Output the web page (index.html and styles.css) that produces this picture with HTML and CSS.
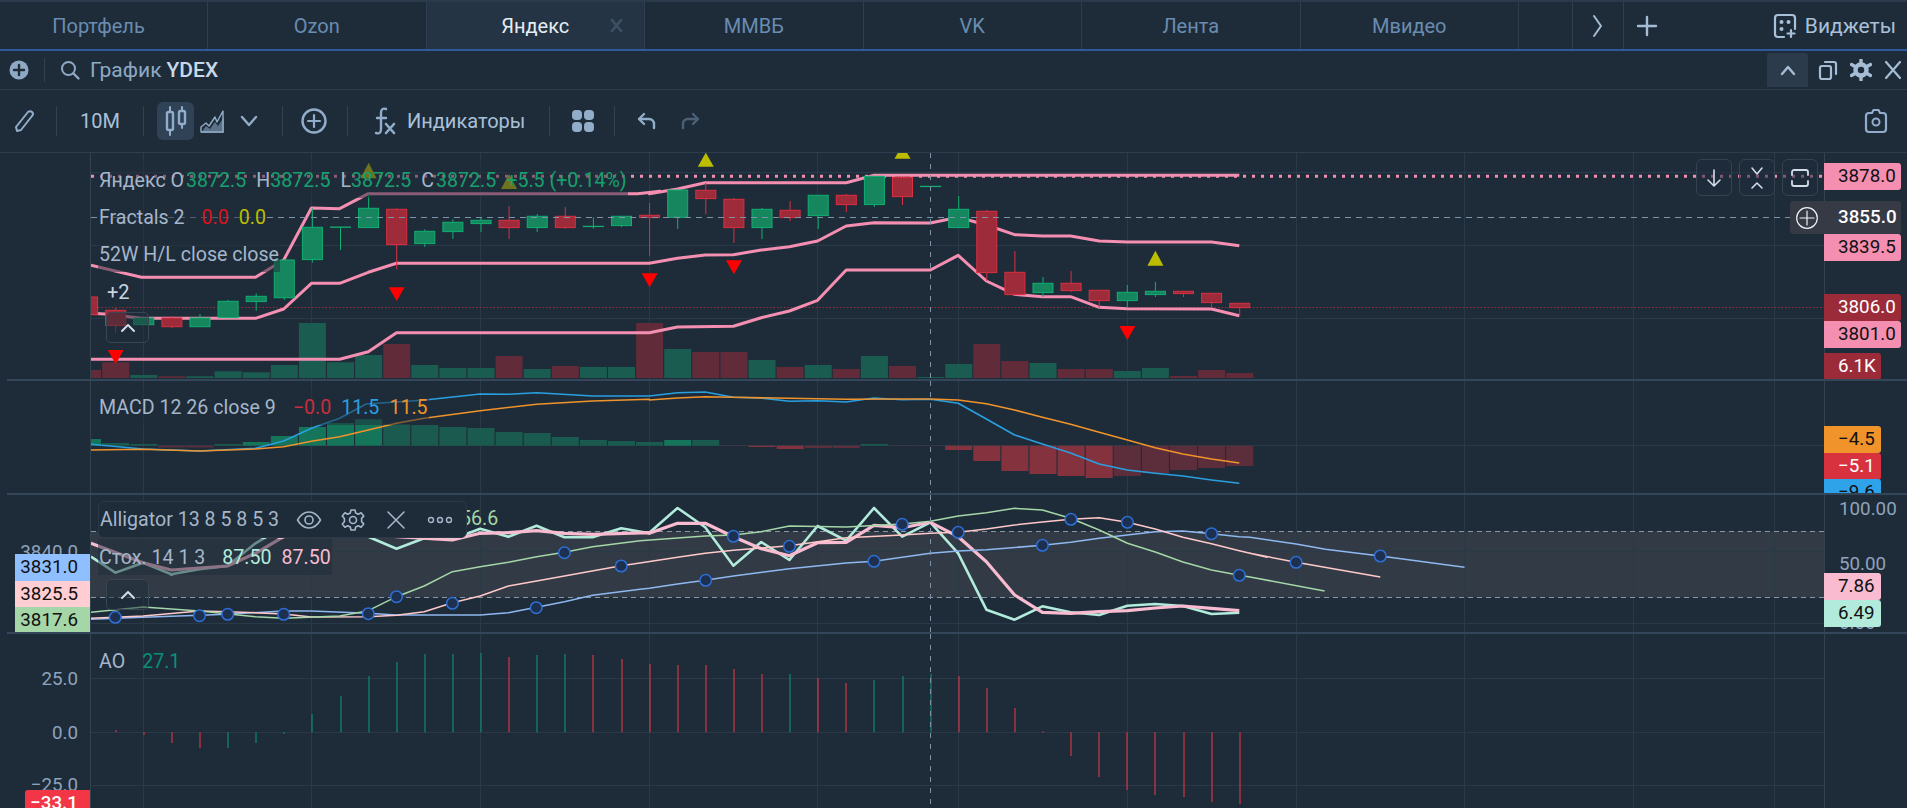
FILE: index.html
```html
<!DOCTYPE html>
<html lang="ru">
<head>
<meta charset="utf-8">
<title>График YDEX</title>
<link rel="stylesheet" href="styles.css">
</head>
<body>
<div class="app">
  <nav class="tabs">
    <div class="tab tab-first">Портфель</div>
    <div class="tab">Ozon</div>
    <div class="tab tab-active">Яндекс
      <svg class="tab-close" viewBox="0 0 14 14"><path d="M2 1l10 12M12 1L2 13"/></svg>
    </div>
    <div class="tab">ММВБ</div>
    <div class="tab">VK</div>
    <div class="tab">Лента</div>
    <div class="tab">Мвидео</div>
    <div class="tab tab-rest"></div>
    <div class="tab-btn">
      <svg class="ico" width="14" height="26" viewBox="0 0 14 26"><path d="M3 3l7 10-7 10" stroke-width="2"/></svg>
    </div>
    <div class="tab-btn tab-plus">
      <svg class="ico" width="22" height="22" viewBox="0 0 22 22"><path d="M11 2v18M2 11h18" stroke-width="2.4"/></svg>
    </div>
    <div class="widgets">
      <svg class="ico" width="26" height="26" viewBox="0 0 26 26"><path d="M12 24H6a3 3 0 0 1-3-3V5a3 3 0 0 1 3-3h14a3 3 0 0 1 3 3v11" stroke-width="2.2"/><path d="M19 17v7M15.5 20.500h7" stroke-width="2.2"/><circle class="ico-fill" cx="9.500" cy="9" r="2"/><circle class="ico-fill" cx="16.500" cy="9" r="2"/><circle class="ico-fill" cx="9.500" cy="16" r="2"/></svg>
      <span>Виджеты</span>
    </div>
  </nav>

  <div class="symbol-bar">
    <svg class="ico add-chart" width="20" height="20" viewBox="0 0 20 20"><circle class="ico-fill" cx="10" cy="10" r="9.500"/><path class="ico-cut" d="M10 5v10M5 10h10"/></svg>
    <span class="vsep vsep-short"></span>
    <svg class="ico search" width="22" height="22" viewBox="0 0 22 22"><circle cx="9.500" cy="9.500" r="6.500" stroke-width="2"/><path d="M14.500 14.500l5 5" stroke-width="2.400"/></svg>
    <span class="symbol-label">График</span>
    <span class="symbol-name">YDEX</span>
    <div class="symbol-actions">
      <span class="collapse-active"><svg class="ico" width="18" height="12" viewBox="0 0 18 12"><path d="M3 10l6-7 6 7" stroke-width="2.400"/></svg></span>
      <svg class="ico" width="20" height="22" viewBox="0 0 20 22"><rect x="2" y="7" width="11" height="13" rx="2" stroke-width="2.200"/><path d="M7 3h9a2 2 0 0 1 2 2v10" stroke-width="2.200"/></svg>
      <svg class="ico" width="22" height="22" viewBox="0 0 22 22"><circle cx="11" cy="11" r="5.500" stroke-width="4.500"/><path d="M11 1v4M11 17v4M1.500 5.500l3.500 2M17 14.500l3.500 2M1.500 16.500l3.500-2M17 7.500l3.500-2" stroke-width="3.400"/></svg>
      <svg class="ico" width="18" height="20" viewBox="0 0 18 20"><path d="M2 2l14 16M16 2L2 18" stroke-width="2.200"/></svg>
    </div>
  </div>

  <div class="toolbar">
    <svg class="ico tool-pencil" width="22" height="24" viewBox="0 0 22 24"><path d="M3 18l1 4 4-1L19 7a2.600 2.600 0 0 0-4-4z" stroke-width="2"/></svg>
    <span class="vsep"></span>
    <span class="tool-text tool-interval">10М</span>
    <span class="vsep"></span>
    <span class="tool-active">
      <svg class="ico" width="24" height="30" viewBox="0 0 24 30"><path d="M6 1v5M6 24v5M18 1v4M18 18v4" stroke-width="2"/><rect x="3" y="6" width="6" height="18" rx="1.500" stroke-width="2.400"/><rect x="15" y="5" width="6" height="13" rx="1.500" stroke-width="2.400"/></svg>
    </span>
    <svg class="ico tool-area" width="26" height="26" viewBox="0 0 26 26"><path d="M2 24v-5l5-4 3 3 6-9 2 5 6-11v21z" stroke-width="1.400"/><path d="M2 25l5-7 4 3 5-7 3 4 6-9v16z" class="ico-soft"/></svg>
    <svg class="ico tool-down" width="18" height="12" viewBox="0 0 18 12"><path d="M2 2l7 8 7-8" stroke-width="2.400"/></svg>
    <span class="vsep"></span>
    <svg class="ico tool-plus" width="26" height="26" viewBox="0 0 26 26"><circle cx="13" cy="13" r="11.500" stroke-width="2.400"/><path d="M13 7v12M7 13h12" stroke-width="2.200"/></svg>
    <span class="vsep"></span>
    <span class="tool-fx"><svg class="ico" width="24" height="30" viewBox="0 0 24 30"><path d="M13 3c-3-1-5 0-5 4v16c0 4-2 5-5 4M4 12h9" stroke-width="2.400"/><path d="M13 18l8 9M21 18l-8 9" stroke-width="2.600"/></svg><span class="tool-text">Индикаторы</span></span>
    <span class="vsep"></span>
    <svg class="ico-solid tool-tiles" width="24" height="24" viewBox="0 0 24 24"><rect x="1" y="1" width="10" height="10" rx="4"/><rect x="13" y="1" width="10" height="10" rx="4"/><rect x="1" y="13" width="10" height="10" rx="4"/><rect x="13" y="13" width="10" height="10" rx="4"/></svg>
    <span class="vsep"></span>
    <svg class="ico tool-undo" width="20" height="20" viewBox="0 0 20 20"><path d="M7 3L2 8l5 5M2 8h10a5 5 0 0 1 5 5v4" stroke-width="2.400"/></svg>
    <svg class="ico ico-dim tool-redo" width="20" height="20" viewBox="0 0 20 20"><path d="M13 3l5 5-5 5M18 8H8a5 5 0 0 0-5 5v4" stroke-width="2.400"/></svg>
    <svg class="ico tool-camera" width="24" height="26" viewBox="0 0 24 26"><path d="M8 5l1.500-3h5L16 5h3a3 3 0 0 1 3 3v13a3 3 0 0 1-3 3H5a3 3 0 0 1-3-3V8a3 3 0 0 1 3-3z" stroke-width="2.200"/><circle cx="12" cy="14" r="3.500" stroke-width="2"/></svg>
  </div>

  <main class="panes">
    <section class="pane">
      <div class="axis axis-left"></div>
      <div class="plot">
        <svg id="plot-price" class="plot-svg"></svg>
        <div class="legend legend-price">
          <div class="legend-row"><span>Яндекс O</span><span class="up gap-xs">3872.5</span><span class="gap-s">H</span><span class="up">3872.5</span><span class="gap-s">L</span><span class="up">3872.5</span><span class="gap-s">C</span><span class="up gap-xs">3872.5</span><span class="up gap-s">+5.5 (+0.14%)</span></div>
          <div class="legend-row"><span>Fractals 2</span><span class="c-red gap-m">0.0</span><span class="c-olive gap-s">0.0</span></div>
          <div class="legend-row"><span>52W H/L close close</span></div>
          <div class="legend-more">+2</div>
          <div class="legend-toggle"><svg class="ico" width="16" height="10" viewBox="0 0 16 10"><path d="M2 8l6-6 6 6" stroke-width="2"/></svg></div>
        </div>
        <div class="corner-btns">
          <span class="corner-btn"><svg class="ico" width="18" height="20" viewBox="0 0 18 20"><path d="M9 2v16M3 12l6 6 6-6" stroke-width="1.600"/></svg></span>
          <span class="corner-btn"><svg class="ico" width="16" height="24" viewBox="0 0 16 24"><path d="M3 2l5 6 5-6M3 22l5-5 5 5" stroke-width="1.600"/></svg></span>
          <span class="corner-btn"><svg class="ico" width="20" height="20" viewBox="0 0 20 20"><path d="M2 7V4a2 2 0 0 1 2-2h12a2 2 0 0 1 2 2v3M2 13v3a2 2 0 0 0 2 2h12a2 2 0 0 0 2-2v-3" stroke-width="1.800"/></svg></span>
        </div>
        <div class="cross-add"><svg class="ico" width="22" height="22" viewBox="0 0 22 22"><circle cx="11" cy="11" r="10.300" stroke-width="1.200"/><path d="M11 4v14M4 11h14" stroke-width="1.200"/></svg></div>
      </div>
      <div class="axis axis-right">
        <span class="tag tag-pink" style="top:10px">3878.0</span>
        <span class="tag tag-cross" style="top:48px">3855.0</span>
        <span class="tag tag-pink" style="top:81px">3839.5</span>
        <span class="tag tag-darkred" style="top:141px">3806.0</span>
        <span class="tag tag-pink" style="top:168px">3801.0</span>
        <span class="tag tag-short tag-darkred" style="top:200px">6.1K</span>
      </div>
    </section>

    <section class="pane">
      <div class="axis axis-left"></div>
      <div class="plot">
        <svg id="plot-macd" class="plot-svg"></svg>
        <div class="legend legend-macd">
          <div class="legend-row"><span>MACD 12 26 close 9</span><span class="c-loss gap-m">−0.0</span><span class="c-blue gap-s">11.5</span><span class="c-orange gap-s">11.5</span></div>
        </div>
      </div>
      <div class="axis axis-right">
        <span class="tag tag-short tag-orange" style="top:45px">−4.5</span>
        <span class="tag tag-short tag-red" style="top:72px">−5.1</span>
        <span class="tag tag-short tag-blue" style="top:98px">−9.6</span>
      </div>
    </section>

    <section class="pane">
      <div class="axis axis-left">
        <span class="scale scale-left" style="top:44px">3840.0</span>
        <span class="tag tag-left tag-sky" style="top:59px">3831.0</span>
        <span class="tag tag-left tag-rose" style="top:86px">3825.5</span>
        <span class="tag tag-left tag-leaf" style="top:112px">3817.6</span>
      </div>
      <div class="plot">
        <svg id="plot-stoch" class="plot-svg"></svg>
        <span class="legend-hidden-value">56.6</span>
        <div class="legend legend-stoch">
          <div class="legend-popover">
            <span>Alligator 13 8 5 8 5 3</span>
            <svg class="ico pop-eye" width="26" height="22" viewBox="0 0 26 22"><path d="M1.500 11C5 5 9 3 13 3s8 2 11.500 8C21 17 17 19 13 19S5 17 1.500 11z" stroke-width="1.600"/><circle cx="13" cy="11" r="4" stroke-width="1.600"/></svg>
            <svg class="ico pop-gear" width="24" height="24" viewBox="0 0 24 24"><circle cx="12" cy="12" r="3.500" stroke-width="1.600"/><path d="M10 2h4l.7 3 2.600 1.200 2.800-1.500 2.600 3.400-2.100 2.300v3.200l2.100 2.300-2.600 3.400-2.800-1.500-2.600 1.200-.7 3h-4l-.7-3-2.600-1.200-2.800 1.500L1.300 16l2.100-2.300v-3.200L1.300 8.100 3.900 4.700l2.800 1.500L9.300 5z" stroke-width="1.600"/></svg>
            <svg class="ico pop-x" width="20" height="20" viewBox="0 0 20 20"><path d="M2 2l16 16M18 2L2 18" stroke-width="1.600"/></svg>
            <svg class="ico pop-dots" width="26" height="10" viewBox="0 0 26 10"><circle cx="4" cy="5" r="2.500" stroke-width="1.400"/><circle cx="13" cy="5" r="2.500" stroke-width="1.400"/><circle cx="22" cy="5" r="2.500" stroke-width="1.400"/></svg>
          </div>
          <div class="legend-row"><span>Стох. 14 1 3</span><span class="c-mint gap-m">87.50</span><span class="c-rose gap-s">87.50</span></div>
          <div class="legend-toggle"><svg class="ico" width="16" height="10" viewBox="0 0 16 10"><path d="M2 8l6-6 6 6" stroke-width="2"/></svg></div>
        </div>
      </div>
      <div class="axis axis-right">
        <span class="scale scale-right" style="top:1px">100.00</span>
        <span class="scale scale-right" style="top:56px">50.00</span>
        <span class="scale scale-right" style="top:115px">0.00</span>
        <span class="tag tag-short tag-pale" style="top:78px">7.86</span>
        <span class="tag tag-short tag-mint" style="top:105px">6.49</span>
      </div>
    </section>

    <section class="pane pane-last">
      <div class="axis axis-left">
        <span class="scale scale-left" style="top:32px">25.0</span>
        <span class="scale scale-left" style="top:86px">0.0</span>
        <span class="scale scale-left" style="top:138px">−25.0</span>
        <span class="tag tag-left tag-loss" style="top:156px">−33.1</span>
      </div>
      <div class="plot">
        <svg id="plot-ao" class="plot-svg"></svg>
        <div class="legend legend-ao">
          <div class="legend-row legend-plain"><span>AO</span><span class="c-teal gap-m">27.1</span></div>
        </div>
      </div>
      <div class="axis axis-right"></div>
    </section>
  </main>
</div>
<script src="chart.js"></script>
</body>
</html>
```

FILE: styles.css
```css
* { box-sizing: border-box; }
html, body { margin: 0; height: 100%; }
body {
  background: #1e2c3a;
  color: #9db3cb;
  font-family: Roboto, "Noto Sans", sans-serif;
  overflow: hidden;
}
.app { height: 808px; display: flex; flex-direction: column; overflow: hidden; }

.ico { fill: none; stroke: currentColor; stroke-linecap: round; stroke-linejoin: round; flex: none; display: block; }
.ico-fill { fill: currentColor; stroke: none; }
.ico-cut { stroke: #1e2c3a; stroke-width: 2.400; }
.ico-soft { fill: currentColor; stroke: none; opacity: .55; }
.ico-solid { fill: currentColor; flex: none; display: block; }
.ico-dim { color: #4c6075; }

/* tabs */
.tabs {
  height: 51px; flex: none; display: flex;
  border-top: 2px solid #2b3b4c;
  border-bottom: 2px solid #2c5a9c;
  color: #6a8cb0;
  font-size: 20px;
}
.tab {
  width: 218.500px; flex: none; display: flex; align-items: center; justify-content: center;
  position: relative; border-right: 1px solid #2e3e4f;
}
.tab-first { width: 208px; padding-right: 10px; }
.tab-active { background: #243444; color: #e6edf4; }
.tab-close { position: absolute; right: 20px; top: 16px; width: 15px; height: 15px; fill: none; stroke: #3d5063; stroke-width: 2.400; }
.tab-rest { width: 54px; }
.tab-btn { width: 51px; flex: none; display: flex; align-items: center; justify-content: center; color: #a6bdd6; border-right: 1px solid #2e3e4f; }
.tab-btn.tab-plus { border-right: 0; width: 46px; }
.widgets { margin-left: auto; display: flex; align-items: center; gap: 7px; padding-right: 11px; color: #a9c0d9; font-size: 21px; }

/* symbol bar */
.symbol-bar {
  height: 39px; flex: none; display: flex; align-items: center;
  border-bottom: 1px solid #2e3d4c; color: #8fa9c4; font-size: 21px;
}
.add-chart { margin-left: 9px; }
.vsep { width: 1px; height: 30px; background: #31414f; flex: none; }
.vsep-short { margin-left: 15px; height: 24px; }
.search { margin-left: 14px; }
.symbol-label { margin-left: 9px; }
.symbol-name { margin-left: 5px; color: #c9d8e8; font-weight: 500; }
.symbol-actions { margin-left: auto; display: flex; align-items: center; padding-right: 5px; gap: 12px; color: #a6bdd6; }
.collapse-active { width: 41px; height: 34px; background: #2b3b4c; border-radius: 3px 3px 0 0; display: flex; align-items: center; justify-content: center; margin-right: -2px; }

/* toolbar */
.toolbar {
  height: 63px; flex: none; display: flex; align-items: center;
  border-bottom: 1px solid #2e3d4c; color: #92adc9; font-size: 20px;
}
.tool-text { color: #a9c0d9; }
.tool-pencil { margin: 0 21px 0 13px; }
.tool-interval { width: 86px; text-align: center; }
.tool-active { width: 37px; height: 38px; margin-left: 13px; background: #2f4256; border-radius: 6px; display: flex; align-items: center; justify-content: center; }
.tool-area { margin-left: 5px; }
.tool-down { margin: 0 24px 0 15px; }
.tool-plus { margin: 0 20px 0 18px; }
.tool-fx { display: flex; align-items: center; gap: 10px; margin: 0 24px 0 25px; }
.tool-tiles { margin: 0 19px 0 21px; }
.tool-undo { margin-left: 22px; }
.tool-redo { margin-left: 23px; }
.tool-camera { margin-left: auto; margin-right: 19px; }

/* panes */
.panes { flex: 1; min-height: 0; display: grid; grid-template-rows: 228px 114px 139px 1fr; }
.pane { display: grid; grid-template-columns: 91px 1fr 83px; position: relative; overflow: hidden; min-height: 0; }
.pane::after { content: ""; position: absolute; left: 7px; right: 0; bottom: 0; height: 2px; background: #33465a; z-index: 5; }
.pane-last::after { display: none; }
.axis { position: relative; min-height: 0; }
.axis-left { border-right: 1px solid #33424f; }
.axis-right { border-left: 1px solid #33424f; }
.plot { position: relative; min-width: 0; min-height: 0; }
.plot-svg { display: block; width: 100%; height: 100%; }

/* axis labels */
.tag, .scale { position: absolute; height: 26.500px; line-height: 26.500px; font-size: 18.800px; white-space: nowrap; }
.tag { left: -1px; width: 77px; padding-left: 14px; border-radius: 0 3px 3px 0; color: #111; z-index: 2; }
.tag-short { width: 57px; padding-left: 14px; }
.tag-pink { background: #f48fb1; }
.tag-cross { background: #363a45; color: #fff; height: 33px; line-height: 33px; font-weight: 500; }
.tag-darkred { background: #9c2b3a; color: #fff; }
.tag-orange { background: #f0932b; }
.tag-red { background: #d8323f; color: #fff; }
.tag-blue { background: #2fa3ea; color: #111; }
.tag-pale { background: #f8bbd0; }
.tag-mint { background: #b2ebdc; }
.tag-left { left: auto; right: 0; width: 75px; padding: 0 12px 0 0; text-align: right; border-radius: 0; }
.tag-sky { background: #90bfff; }
.tag-rose { background: #ffcdd2; }
.tag-leaf { background: #a5d6a7; }
.tag-loss { background: #f23645; color: #fff; width: 65px; border-radius: 3px 0 0 0; font-weight: 500; }
.scale { color: #8fa3bb; }
.scale-left { right: 12px; }
.scale-right { left: 14px; }

/* legends */
.legend { position: absolute; left: 7px; display: flex; flex-direction: column; align-items: flex-start; z-index: 3; font-size: 19.600px; color: #a5b6ca; }
.legend-price { top: 9px; gap: 1px; }
.legend-macd { top: 8px; }
.legend-stoch { top: 6px; gap: 1px; }
.legend-ao { top: 9px; }
.legend-row { display: flex; align-items: center; height: 36px; padding: 0 1px; white-space: nowrap; background: rgba(30, 44, 58, .5); }
.legend-plain { background: none; }
.legend-more { margin: 1px 0 0 9px; height: 37px; line-height: 37px; font-size: 20px; color: #c8d4e0; }
.legend-toggle { width: 43px; height: 31px; margin-left: 8px; border: 1px solid #394654; border-radius: 5px; background: rgba(30, 44, 58, .5); display: flex; align-items: center; justify-content: center; color: #d3dde8; }
.legend-stoch .legend-toggle { margin-top: 3px; }
.legend-popover { height: 37px; width: 369px; display: flex; align-items: center; padding-left: 1px; border: 1px solid #2b3947; border-radius: 6px; background: #1e2b38; white-space: nowrap; }
.pop-eye { margin-left: 17px; }
.pop-gear { margin-left: 19px; }
.pop-x { margin-left: 21px; }
.pop-dots { margin-left: 21px; }
.legend-hidden-value { position: absolute; left: 369px; top: 12px; font-size: 19.600px; color: #a5d6a7; z-index: 2; }
.up { color: #17a06e; }
.gap-xs { margin-left: 2px; }
.gap-s { margin-left: 10px; }
.gap-m { margin-left: 17px; }
.c-red { color: #d8141e; }
.c-olive { color: #bdbd00; }
.c-loss { color: #c92c3c; }
.c-blue { color: #2a9fe0; }
.c-orange { color: #f0932b; }
.c-mint { color: #b2ebdc; }
.c-rose { color: #f8bbd0; }
.c-teal { color: #0b8f78; }

/* buttons over the price plot */
.corner-btns { position: absolute; top: 6px; right: 6px; display: flex; gap: 7px; z-index: 3; }
.corner-btn { width: 36px; height: 37px; border: 1px solid #36434f; border-radius: 6px; background: rgba(30, 44, 58, .55); display: flex; align-items: center; justify-content: center; color: #d3dde8; }
.cross-add { position: absolute; top: 48px; right: 0; width: 34px; height: 33px; background: #363a45; border-radius: 4px 0 0 4px; display: flex; align-items: center; justify-content: center; color: #eef2f6; z-index: 3; }
```

FILE: chart.js
```js
// Chart data. X positions of free points are in crop coordinates of three
// horizontal bands; y values are stored with 3 units per pixel.
var STEP = 28.1, X0 = 115.7;
function bx(i) { return X0 + STEP * i; }
function L(x) { return x / 2.376; }
function M(x) { return 640 + x / 2.376; }
function R(x) { return 1250 + x / 2.387; }
function pts(groups, base) {
  var out = [];
  groups.forEach(function (g) {
    for (var k = 0; k < g[1].length; k += 2) {
      out.push(g[0](g[1][k]).toFixed(1) + ',' + (base + g[1][k + 1] / 3).toFixed(1));
    }
  });
  return out.join(' ');
}
function line(p, color, w, extra) {
  return '<polyline points="' + p + '" fill="none" stroke="' + color + '" stroke-width="' + w + '" stroke-linejoin="round" ' + (extra || '') + '/>';
}
function rect(x, y, w, h, fill, extra) {
  return '<rect x="' + x.toFixed(1) + '" y="' + y.toFixed(1) + '" width="' + w.toFixed(1) + '" height="' + Math.max(h, 0).toFixed(1) + '" fill="' + fill + '" ' + (extra || '') + '/>';
}
function hline(y, color, extra) {
  return '<line x1="91" x2="1824" y1="' + y + '" y2="' + y + '" stroke="' + color + '" stroke-width="1" ' + (extra || '') + '/>';
}
var GRID_X = [143.5, 311.5, 480.5, 649.5, 817.5, 958.5, 1127.5, 1296.5, 1464.5, 1633.5, 1774.5];
var GRID = '#2a3948', CROSS = '#7f93a8';
function gridFor(ys, top, h) {
  var s = '';
  GRID_X.forEach(function (x) {
    s += '<line x1="' + x + '" x2="' + x + '" y1="' + top + '" y2="' + (top + h) + '" stroke="' + GRID + '"/>';
  });
  ys.forEach(function (y) { s += hline(y, GRID); });
  return s;
}
function crossV(top, h) {
  return '<line x1="930.5" x2="930.5" y1="' + top + '" y2="' + (top + h) + '" stroke="' + CROSS + '" stroke-dasharray="5 6"/>';
}
function paint(id, top, h, html) {
  var el = document.getElementById(id);
  el.setAttribute('viewBox', '91 ' + top + ' 1733 ' + h);
  el.setAttribute('preserveAspectRatio', 'none');
  el.innerHTML = html;
}

/* ---------- price pane ---------- */
var candles = [
  [-1, 441, 494, 441, 494, 'r'], [0, 481, 527, 473, 548, 'r'], [1, 504, 524, 504, 524, 'g'],
  [2, 504, 530, 498, 534, 'r'], [3, 504, 530, 492, 530, 'g'], [4, 454, 503, 450, 503, 'g'],
  [5, 439, 455, 430, 482, 'g'], [6, 330, 443, 330, 450, 'g'], [7, 232, 329, 175, 338, 'g'],
  [8, 231, 232, 231, 300, 'g'], [9, 175, 233, 133, 233, 'g'], [10, 178, 284, 175, 358, 'r'],
  [11, 244, 281, 238, 291, 'g'], [12, 217, 245, 208, 267, 'g'], [13, 211, 221, 203, 246, 'g'],
  [14, 211, 233, 168, 267, 'r'], [15, 199, 233, 192, 246, 'g'], [16, 199, 233, 171, 236, 'r'],
  [17, 229, 230, 202, 236, 'g'], [18, 199, 227, 199, 231, 'g'], [19, 196, 203, 159, 317, 'r'],
  [20, 120, 202, 120, 237, 'g'], [21, 121, 146, 99, 192, 'r'], [22, 148, 233, 144, 279, 'r'],
  [23, 178, 233, 174, 267, 'g'], [24, 181, 203, 153, 213, 'r'], [25, 136, 197, 136, 237, 'g'],
  [26, 136, 164, 132, 186, 'r'], [27, 79, 164, 79, 171, 'g'], [28, 82, 140, 78, 165, 'r'],
  [29, 109, 110, 109, 110, 'g'], [30, 178, 233, 138, 233, 'g'], [31, 184, 368, 180, 393, 'r'],
  [32, 367, 434, 303, 434, 'r'], [33, 400, 428, 381, 441, 'g'], [34, 400, 422, 363, 426, 'r'],
  [35, 421, 452, 421, 473, 'r'], [36, 427, 452, 405, 473, 'g'], [37, 424, 434, 396, 441, 'g'],
  [38, 424, 431, 424, 441, 'r'], [39, 430, 458, 430, 474, 'r'], [40, 460, 473, 460, 499, 'r']
];
var volume = [
  [660, 'r'], [637, 'r'], [675, 'g'], [679, 'r'], [679, 'g'], [664, 'g'], [667, 'g'], [645, 'g'],
  [519, 'g'], [637, 'g'], [615, 'g'], [582, 'r'], [645, 'g'], [654, 'g'], [654, 'g'], [618, 'r'],
  [657, 'g'], [648, 'r'], [651, 'g'], [651, 'g'], [519, 'r'], [597, 'g'], [606, 'r'], [606, 'r'],
  [630, 'g'], [651, 'r'], [645, 'g'], [657, 'r'], [618, 'g'], [648, 'r'], [681, 'g'], [642, 'g'],
  [582, 'r'], [633, 'r'], [639, 'g'], [657, 'r'], [657, 'r'], [663, 'g'], [654, 'g'], [678, 'r'],
  [660, 'r'], [669, 'r']
];
var fractalsUp = [[9, 38, 85], [14, 72, 117], [21, 8, 50], [28, -16, 26], [37, 302, 347]];
var fractalsDown = [[0, 600, 642], [10, 412, 453], [19, 370, 412], [22, 331, 373], [36, 528, 570]];

function tri(i, a, b, color) {
  var x = bx(i), y1 = 150 + a / 3, y2 = 150 + b / 3;
  var p = color === '#ff0000'
    ? (x - 8) + ',' + y1 + ' ' + (x + 8) + ',' + y1 + ' ' + x + ',' + y2
    : (x - 8) + ',' + y2 + ' ' + (x + 8) + ',' + y2 + ' ' + x + ',' + y1;
  return '<polygon points="' + p + '" fill="' + color + '"/>';
}

(function () {
  var s = gridFor([172.5, 245.5, 318.5], 153, 228);
  s += hline(307.5, '#9c2b3a', 'stroke-dasharray="1.500 2"');
  volume.forEach(function (v, k) {
    var i = k - 1;
    s += rect(bx(i) - 13.5, 150 + v[0] / 3, 27, 378 - (150 + v[0] / 3), v[1] === 'g' ? '#1a5c50' : '#612b39');
  });
  s += '<line x1="91" x2="1824" y1="176.3" y2="176.3" stroke="#f48fb1" stroke-width="3" stroke-dasharray="3 6"/>';
  var P = '#f48fb1', W = 3;
  s += line(pts([[L, [216, 346, 336, 382, 607, 382, 674, 330, 740, 174, 807, 176, 875, 131, 1515, 131, 1568, 124]],
    [M, [22, 131, 89, 117, 155, 98, 490, 98, 556, 76, 1424, 76]]], 150), P, W);
  s += line(pts([[L, [216, 490, 250, 492, 336, 505, 607, 505, 674, 477, 740, 400, 807, 400, 875, 367, 942, 340, 1543, 340]],
    [M, [22, 340, 89, 325, 155, 315, 222, 314, 288, 300, 355, 290, 422, 273, 490, 228, 556, 218, 690, 219, 756, 202, 823, 225, 890, 254, 956, 258, 1023, 258, 1091, 273, 1158, 276, 1358, 276, 1424, 287]]], 150), P, W);
  s += line(pts([[L, [216, 628, 807, 628, 875, 605, 942, 548, 1543, 548]],
    [M, [22, 548, 89, 531, 222, 529, 288, 503, 355, 483, 422, 451, 490, 360, 690, 360, 756, 316, 823, 393, 890, 433, 956, 440, 1023, 440, 1091, 472, 1158, 476, 1358, 477, 1424, 497]]], 150), P, W);
  candles.forEach(function (c) {
    var x = bx(c[0]), g = c[5] === 'g';
    var edge = g ? '#10b070' : '#dc2f40', fill = g ? '#16865f' : '#9e2b39';
    s += '<line x1="' + x.toFixed(1) + '" x2="' + x.toFixed(1) + '" y1="' + (150 + c[3] / 3).toFixed(1) + '" y2="' + (150 + c[4] / 3).toFixed(1) + '" stroke="' + edge + '"/>';
    s += rect(x - 10, 150 + c[1] / 3, 20, (c[2] - c[1]) / 3, fill, 'stroke="' + edge + '"');
  });
  fractalsUp.forEach(function (t) { s += tri(t[0], t[1], t[2], '#bdbd00'); });
  fractalsDown.forEach(function (t) { s += tri(t[0], t[1], t[2], '#ff0000'); });
  s += hline(217.5, CROSS, 'stroke-dasharray="6 5"') + crossV(153, 228);
  paint('plot-price', 153, 228, s);
})();

/* ---------- MACD pane ---------- */
(function () {
  var base = 380, zero = 197;
  var hist = [177, 189, 192, 202, 202, 192, 186, 168, 141, 129, 118, 132, 135, 141, 144, 156, 159, 171, 180, 183, 186, 180, 180, 198, 201, 207, 204, 204, 192, 198, 198, 210, 243, 273, 282, 288, 294, 288, 279, 270, 264, 258];
  var neg = { 3: 1, 4: 1, 23: 1, 24: 1, 25: 1, 26: 1, 27: 1, 29: 1, 30: 1, 31: 1, 32: 1, 33: 1, 34: 1, 35: 1, 36: 1, 37: 1, 38: 1, 39: 1, 40: 1, 41: 1 };
  var s = gridFor([445.5], 381, 114);
  hist.forEach(function (v, k) {
    var i = k - 1, isNeg = neg[k], mag = Math.abs(v - zero), prev = k ? Math.abs(hist[k - 1] - zero) : 0;
    var grow = mag > prev, col;
    if (isNeg) { col = grow ? '#85323f' : '#5c2e3c'; } else { col = grow ? '#15755a' : '#1b5a4e'; }
    var y = base + Math.min(v, zero) / 3;
    s += rect(bx(i) - 13.5, y, 27, mag / 3, col);
  });
  s += line(pts([[L, [216, 193, 340, 207, 474, 213, 607, 205, 674, 183, 740, 145, 807, 115, 870, 72, 1010, 60, 1141, 42, 1208, 43, 1275, 38, 1408, 48, 1543, 48]],
    [M, [22, 48, 89, 38, 155, 36, 222, 52, 288, 54, 355, 64, 422, 62, 490, 66, 556, 54, 623, 59, 690, 58, 756, 70, 823, 117, 890, 165, 956, 192, 1023, 219, 1091, 252, 1158, 270, 1224, 280, 1290, 288, 1358, 300, 1424, 310]]], base), '#2a9fe0', 1.6);
  s += line(pts([[L, [216, 210, 340, 208, 474, 213, 607, 207, 674, 200, 740, 184, 807, 170, 875, 150, 942, 130, 1008, 115, 1141, 92, 1275, 73, 1408, 63, 1543, 58]],
    [M, [22, 60, 89, 54, 155, 50, 222, 52, 355, 55, 490, 58, 623, 57, 690, 57, 756, 60, 823, 71, 890, 90, 956, 112, 1023, 133, 1091, 157, 1158, 180, 1224, 203, 1290, 222, 1358, 237, 1424, 249]]], base), '#f0932b', 1.6);
  s += crossV(381, 114);
  paint('plot-macd', 381, 114, s);
})();

/* ---------- Alligator + Stochastic pane ---------- */
(function () {
  var base = 380;
  var s = rect(91, 531.5, 1733, 66, '#313a45');
  s += gridFor([551.5, 623.5], 495, 139);
  s += hline(531.5, '#8c96a3', 'stroke-dasharray="5 4"') + hline(597.5, '#8c96a3', 'stroke-dasharray="5 4"');
  var mint = '#b2ebdc', rose = '#f8bbd0';
  s += line(pts([[L, [216, 530, 274, 578, 340, 548, 407, 583, 474, 568, 540, 558, 607, 490, 674, 440, 800, 430, 942, 506, 1008, 475, 1075, 478, 1141, 446, 1208, 470, 1275, 437, 1341, 472, 1408, 472, 1476, 445, 1543, 460]],
    [M, [22, 458, 89, 384, 155, 442, 222, 557, 288, 486, 355, 540, 422, 438, 490, 482, 556, 384, 623, 470, 690, 427, 756, 520, 823, 689, 890, 719, 956, 679, 1023, 697, 1091, 705, 1158, 677, 1224, 672, 1290, 678, 1358, 702, 1424, 698]]], base), mint, 2.6);
  s += line(pts([[L, [216, 490, 340, 548, 407, 570, 540, 558, 607, 520, 674, 470, 800, 440, 942, 470, 1075, 480, 1141, 460, 1208, 458, 1275, 452, 1341, 460, 1408, 463, 1543, 458]],
    [M, [22, 460, 89, 430, 155, 430, 222, 470, 288, 506, 355, 527, 422, 488, 490, 487, 556, 436, 623, 443, 690, 427, 756, 470, 823, 545, 890, 645, 956, 697, 1023, 700, 1091, 695, 1158, 692, 1224, 684, 1290, 678, 1358, 685, 1424, 692]]], base), rose, 3.2);
  s += line(pts([[L, [216, 718, 340, 712, 474, 706, 540, 703, 674, 693, 740, 693, 875, 700, 942, 705, 1141, 705, 1208, 698, 1275, 682, 1341, 665, 1408, 646]],
    [M, [0, 628, 22, 625, 89, 612, 155, 601, 222, 588, 355, 566, 490, 549, 556, 544, 623, 532, 690, 520, 756, 513, 823, 509, 956, 496, 1023, 487, 1091, 475, 1158, 465, 1224, 455, 1290, 453, 1358, 461, 1424, 470]],
    [R, [0, 472, 110, 492, 180, 508, 311, 528, 512, 562]]], base), '#8fb8f0', 1.5);
  s += line(pts([[L, [216, 715, 340, 708, 474, 693, 540, 695, 674, 702, 740, 711, 875, 710, 942, 706, 1008, 695, 1075, 668, 1141, 648, 1208, 618, 1275, 603, 1341, 588, 1476, 557]],
    [M, [0, 549, 89, 532, 155, 520, 222, 511, 355, 497, 490, 473, 623, 465, 690, 460, 756, 457, 823, 447, 890, 435, 956, 426, 1023, 418, 1091, 413, 1158, 427, 1224, 447, 1290, 472, 1358, 491, 1424, 512, 1490, 532]],
    [R, [0, 520, 110, 547, 311, 591]]], base), '#ffc9c9', 1.5);
  s += line(pts([[L, [216, 697, 340, 681, 474, 693, 607, 710, 674, 715, 807, 708, 875, 692, 942, 650, 1008, 618, 1075, 575, 1141, 560, 1208, 547, 1275, 530, 1341, 517, 1408, 500]],
    [M, [0, 482, 155, 468, 222, 465, 288, 455, 355, 438, 490, 441, 623, 432, 690, 424, 756, 408, 823, 398, 890, 385, 956, 390, 1023, 415, 1091, 450, 1158, 490, 1224, 516, 1290, 546, 1358, 570, 1424, 586]],
    [R, [0, 591, 178, 633]]], base), '#a5d6a7', 1.5);
  var dots = [[L, 274, 712], [L, 474, 707], [L, 541, 703], [L, 674, 703], [L, 875, 701], [L, 942, 650], [L, 1075, 670], [L, 1274, 683], [L, 1341, 518], [L, 1476, 558],
    [M, 156, 601], [M, 222, 469], [M, 355, 499], [M, 556, 544], [M, 623, 433], [M, 756, 457], [M, 956, 496], [M, 1024, 418], [M, 1158, 427], [M, 1358, 461], [M, 1424, 586],
    [R, 110, 547], [R, 311, 528]];
  dots.forEach(function (d) {
    s += '<circle cx="' + d[0](d[1]).toFixed(1) + '" cy="' + (base + d[2] / 3).toFixed(1) + '" r="5.8" fill="#1d3050" stroke="#2e6fd6" stroke-width="1.5"/>';
  });
  s += crossV(495, 139);
  paint('plot-stoch', 495, 139, s);
})();

/* ---------- AO pane ---------- */
(function () {
  var zero = 307, base = 630;
  var bars = [[300, 'r'], [315, 'r'], [339, 'r'], [354, 'r'], [354, 'g'], [339, 'g'], [312, 'g'], [252, 'g'], [198, 'g'], [138, 'g'], [96, 'g'], [72, 'g'], [72, 'g'], [69, 'g'], [81, 'r'], [75, 'g'], [72, 'g'], [75, 'r'], [87, 'r'], [102, 'r'], [105, 'r'], [105, 'r'], [117, 'r'], [132, 'r'], [132, 'g'], [144, 'r'], [159, 'r'], [150, 'g'], [138, 'g'], [132, 'g'], [138, 'r'], [174, 'r'], [234, 'r'], [303, 'r'], [378, 'r'], [441, 'r'], [480, 'r'], [495, 'r'], [501, 'r'], [516, 'r'], [522, 'r']];
  var s = gridFor([678.5, 732.5, 785.5], 634, 174);
  bars.forEach(function (b, i) {
    var y1 = base + Math.min(b[0], zero) / 3, h = Math.abs(b[0] - zero) / 3;
    s += rect(Math.round(bx(i)) - 0.5, y1, 1, h, b[1] === 'g' ? '#089981' : '#f23645');
  });
  s += crossV(634, 174);
  paint('plot-ao', 634, 174, s);
})();
```
